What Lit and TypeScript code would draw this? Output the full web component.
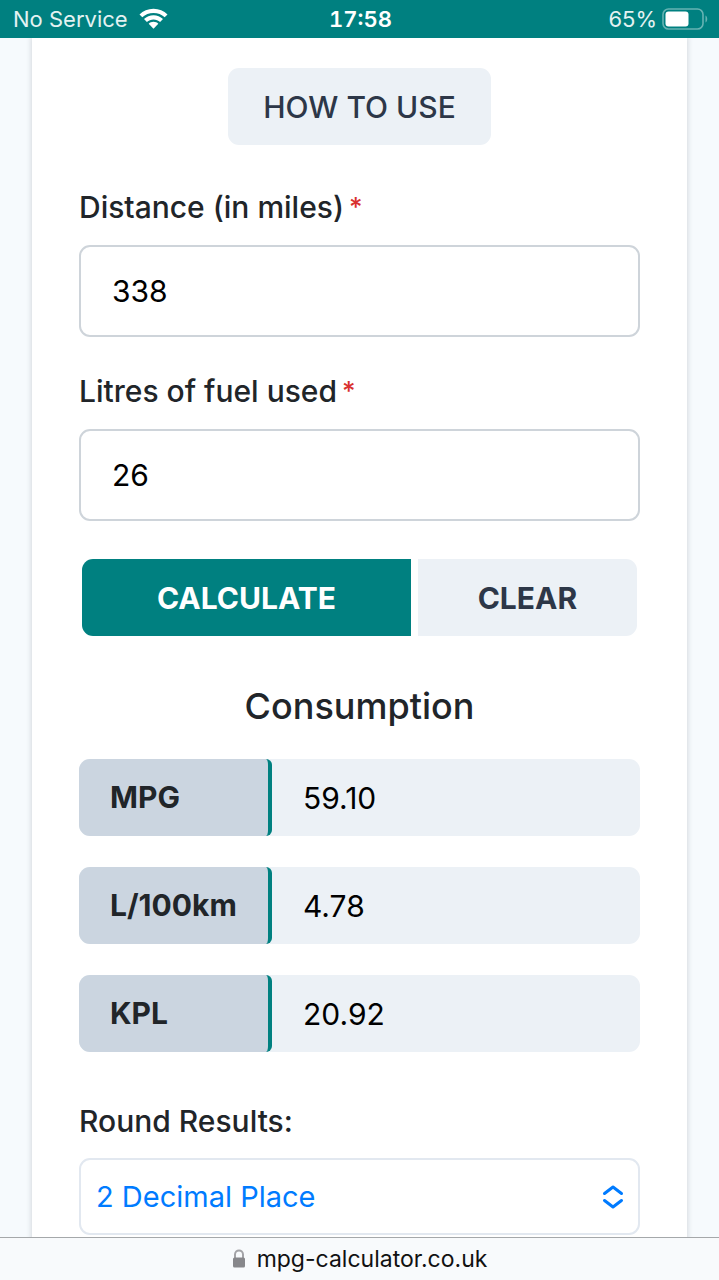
import { LitElement, html, css } from "lit";
import { customElement, state } from "lit/decorators.js";

const LITRES_PER_GALLON = 4.54609;
const KM_PER_MILE = 1.609344;

@customElement("status-bar")
class StatusBar extends LitElement {
  static styles = css`
    :host {
      display: grid;
      grid-template-columns: 1fr auto 1fr;
      align-items: center;
      height: 38px;
      padding: 0 11px 0 13px;
      background: #008080;
      color: #fff;
      font-size: 22px;
      line-height: 38px;
    }
    .side {
      display: flex;
      align-items: center;
      gap: 11px;
      color: #e4f2f2;
    }
    .end {
      justify-content: flex-end;
      gap: 5px;
    }
    .time {
      font-weight: 600;
      font-variant-numeric: tabular-nums;
    }
    svg {
      display: block;
    }
  `;

  render() {
    return html`
      <div class="side">
        <span>No Service</span>
        <svg width="29" height="22" viewBox="0 0 29 22" fill="#fff" aria-hidden="true">
          <path d="M14.5 .8C9 .8 4.100 2.900.5 6.400L3.300 9.200C6.300 6.400 10.100 4.900 14.500 4.900S22.700 6.400 25.700 9.200L28.500 6.400C24.900 2.900 20 .8 14.500 .8Z" />
          <path d="M14.500 7.300C11 7.300 7.600 8.700 5 11.100L7.900 14C9.700 12.300 12 11.400 14.500 11.400S19.300 12.300 21.100 14L24 11.100C21.400 8.700 18 7.300 14.500 7.300Z" />
          <path d="M14.500 13.800C12.600 13.800 11 14.500 9.700 15.700L14.500 20.800L19.300 15.700C18 14.500 16.400 13.800 14.500 13.800Z" />
        </svg>
      </div>
      <span class="time">17:58</span>
      <div class="side end">
        <span>65%</span>
        <svg width="46" height="22" viewBox="0 0 46 22" aria-hidden="true">
          <rect x="1" y="1" width="40" height="20" rx="5.500" fill="none" stroke="#66b3b3" stroke-width="1.600" />
          <rect x="3.500" y="3.500" width="23" height="15" rx="3" fill="#fff" />
          <path d="M43.500 7.500C45.800 8.600 45.800 13.400 43.500 14.500Z" fill="#66b3b3" />
        </svg>
      </div>
    `;
  }
}

@customElement("address-bar")
class AddressBar extends LitElement {
  static styles = css`
    :host {
      display: flex;
      align-items: center;
      justify-content: center;
      gap: 11px;
      height: 43px;
      border-top: 1px solid #a5a8aa;
      background: #f8fafc;
    }
    a {
      color: #111;
      font-size: 23px;
      line-height: 42px;
      text-decoration: none;
    }
  `;

  render() {
    return html`
      <svg width="14" height="20" viewBox="0 0 14 20" aria-hidden="true">
        <path d="M3 9V5.500C3 0 11 0 11 5.500V9" fill="none" stroke="#a3a3a7" stroke-width="2" />
        <rect x="1" y="8.500" width="12" height="10" rx="1.500" fill="#87878b" />
      </svg>
      <a href="#">mpg-calculator.co.uk</a>
    `;
  }
}

@customElement("app-root")
class AppRoot extends LitElement {
  @state() distance = "338";
  @state() litres = "26";
  @state() places = 2;
  @state() results: number[] | null = AppRoot.compute(338, 26);

  static compute(miles: number, litres: number) {
    const km = miles * KM_PER_MILE;
    return [(miles * LITRES_PER_GALLON) / litres, (litres * 100) / km, km / litres];
  }

  static styles = css`
    :host {
      display: flex;
      flex-direction: column;
      height: 100vh;
      background: #f6fafd;
      color: #212529;
      font-family: Inter, "Liberation Sans", sans-serif;
      font-size: 30px;
      line-height: 40px;
    }
    * {
      box-sizing: border-box;
    }
    button,
    input,
    select {
      margin: 0;
      border: 0;
      font: inherit;
    }
    status-bar,
    address-bar {
      flex: none;
    }
    main {
      flex: 1;
      min-height: 0;
      overflow: hidden;
      padding: 0 32px;
    }
    .card {
      min-height: 100%;
      padding: 30px 47px;
      background: #fff;
      box-shadow: 0 0 5px 1px #d5d9de;
    }
    .help {
      display: block;
      margin: 0 auto 42px;
      height: 77px;
      padding: 0 35px;
      border-radius: 11px;
      background: #ecf1f6;
      color: #2d3748;
      font-weight: 500;
    }
    .field {
      display: flex;
      flex-direction: column;
      gap: 18px;
      margin-bottom: 34px;
    }
    .field label,
    .rounding label {
      font-weight: 500;
    }
    .field label {
      display: flex;
      gap: 5px;
    }
    .required {
      color: #d9302f;
      font-size: 26px;
    }
    .field input {
      width: 100%;
      height: 92px;
      padding: 0 31px;
      border: 2px solid #ced4da;
      border-radius: 11px;
      background: #fff;
      color: #000;
    }
    .actions {
      display: grid;
      grid-template-columns: 3fr 2fr;
      gap: 7px;
      margin: 38px 3px 46px;
    }
    .actions button {
      height: 77px;
      font-weight: 700;
    }
    .calculate {
      border-radius: 11px 0 0 11px;
      background: #008080;
      color: #fff;
    }
    .clear {
      border-radius: 0 11px 11px 0;
      background: #ecf1f6;
      color: #2d3748;
    }
    h2 {
      margin: 0 0 29px;
      font-size: 36px;
      font-weight: 500;
      line-height: 48px;
      text-align: center;
    }
    .results {
      display: grid;
      gap: 31px;
      margin-bottom: 49px;
    }
    .result {
      display: flex;
      height: 77px;
      border-radius: 11px;
      background: #ecf1f6;
      overflow: hidden;
    }
    .result label {
      flex: none;
      width: 193px;
      padding-left: 31px;
      border-right: 4px solid #008080;
      border-radius: 0 6px 6px 0;
      background: #cbd5e0;
      font-weight: 700;
      line-height: 77px;
    }
    .result input {
      flex: 1;
      min-width: 0;
      padding: 0 31px;
      background: none;
      color: #000;
    }
    .rounding {
      display: grid;
      gap: 17px;
    }
    .picker {
      display: grid;
      grid-template-columns: 1fr auto;
      align-items: center;
    }
    .picker select {
      grid-area: 1 / 1 / 2 / 3;
      width: 100%;
      height: 77px;
      padding: 0 60px 0 15px;
      appearance: none;
      border: 2px solid #e2e8f0;
      border-radius: 11px;
      background: #fff;
      color: #007bff;
      font-size: 29px;
    }
    .picker svg {
      grid-area: 1 / 2;
      margin-right: 16px;
      pointer-events: none;
    }
  `;

  private calculate(event: Event) {
    event.preventDefault();
    const miles = Number(this.distance);
    const litres = Number(this.litres);
    this.results = miles > 0 && litres > 0 ? AppRoot.compute(miles, litres) : null;
  }

  private clear() {
    this.distance = "";
    this.litres = "";
    this.results = null;
  }

  render() {
    const names = ["MPG", "L/100km", "KPL"];
    return html`
      <status-bar></status-bar>
      <main>
        <form class="card" @submit=${this.calculate}>
          <button class="help" type="button">HOW TO USE</button>
          <div class="field">
            <label for="distance">Distance (in miles) <span class="required">*</span></label>
            <input
              id="distance"
              inputmode="decimal"
              .value=${this.distance}
              @input=${(e: Event) => (this.distance = (e.target as HTMLInputElement).value)}
            />
          </div>
          <div class="field">
            <label for="litres">Litres of fuel used <span class="required">*</span></label>
            <input
              id="litres"
              inputmode="decimal"
              .value=${this.litres}
              @input=${(e: Event) => (this.litres = (e.target as HTMLInputElement).value)}
            />
          </div>
          <div class="actions">
            <button class="calculate" type="submit">CALCULATE</button>
            <button class="clear" type="button" @click=${this.clear}>CLEAR</button>
          </div>
          <h2>Consumption</h2>
          <div class="results">
            ${names.map(
              (name, i) => html`
                <div class="result">
                  <label for="result-${i}">${name}</label>
                  <input
                    id="result-${i}"
                    readonly
                    .value=${this.results ? this.results[i].toFixed(this.places) : ""}
                  />
                </div>
              `
            )}
          </div>
          <div class="rounding">
            <label for="places">Round Results:</label>
            <div class="picker">
              <select
                id="places"
                @change=${(e: Event) => (this.places = Number((e.target as HTMLSelectElement).value))}
              >
                ${[0, 1, 2, 3, 4].map(
                  (n) => html`<option value=${n} ?selected=${n === this.places}>${n} Decimal Place</option>`
                )}
              </select>
              <svg width="22" height="26" viewBox="0 0 22 26" fill="none" stroke="#007bff" stroke-width="3" stroke-linecap="round" stroke-linejoin="round" aria-hidden="true">
                <path d="M2.500 9.500L11 3L19.500 9.500M2.500 16.500L11 23L19.500 16.500" />
              </svg>
            </div>
          </div>
        </form>
      </main>
      <address-bar></address-bar>
    `;
  }
}
